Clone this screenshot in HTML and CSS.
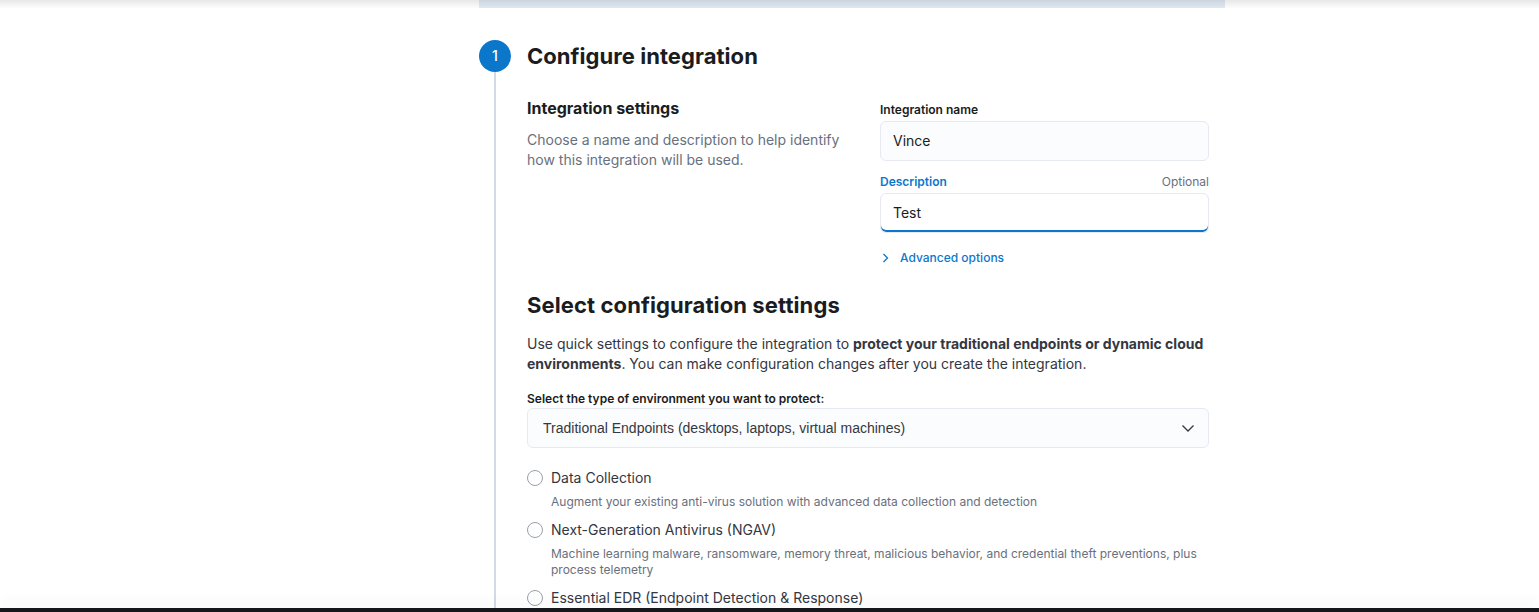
FILE: index.html
```html
<!DOCTYPE html>
<html lang="en">
<head>
<meta charset="utf-8">
<title>Configure integration</title>
<link rel="stylesheet" href="styles.css">
</head>
<body>
<div class="top-shadow"></div>
<main class="page">
  <div class="band"></div>
  <section class="step">
    <header class="step-head">
      <span class="step-num">1</span>
      <h2 class="step-title">Configure integration</h2>
    </header>
    <div class="step-body">
      <div class="described">
        <div class="described-text">
          <h3 class="sub-title">Integration settings</h3>
          <p class="muted">Choose a name and description to help identify how this integration will be used.</p>
        </div>
        <div class="described-fields">
          <div class="form-row">
            <div class="label-row"><label class="label">Integration name</label></div>
            <div class="input">Vince</div>
          </div>
          <div class="form-row">
            <div class="label-row"><label class="label label-active">Description</label><span class="optional">Optional</span></div>
            <div class="input input-focus">Test</div>
          </div>
          <a class="adv-link">
            <svg class="chev-right" width="12" height="16" viewBox="0 0 12 16"><path d="M3.5 4 L7.5 8 L3.5 12" fill="none" stroke="currentColor" stroke-width="1.3"/></svg>
            <span>Advanced options</span>
          </a>
        </div>
      </div>

      <h2 class="section-title">Select configuration settings</h2>
      <p class="body-text">Use quick settings to configure the integration to <strong>protect your traditional endpoints or dynamic cloud environments</strong>. You can make configuration changes after you create the integration.</p>

      <div class="form-row select-row">
        <div class="label-row"><label class="label">Select the type of environment you want to protect:</label></div>
        <div class="select">
          <span>Traditional Endpoints (desktops, laptops, virtual machines)</span>
          <svg class="chev-down" width="16" height="16" viewBox="0 0 16 16"><path d="M2.5 5.5 L8 11 L13.5 5.5" fill="none" stroke="#343741" stroke-width="1.3"/></svg>
        </div>
      </div>

      <div class="radios">
        <div class="radio">
          <span class="radio-dot"></span>
          <div class="radio-text">
            <div class="radio-label">Data Collection</div>
            <div class="radio-desc">Augment your existing anti-virus solution with advanced data collection and detection</div>
          </div>
        </div>
        <div class="radio">
          <span class="radio-dot"></span>
          <div class="radio-text">
            <div class="radio-label">Next-Generation Antivirus (NGAV)</div>
            <div class="radio-desc">Machine learning malware, ransomware, memory threat, malicious behavior, and credential theft preventions, plus process telemetry</div>
          </div>
        </div>
        <div class="radio">
          <span class="radio-dot"></span>
          <div class="radio-text">
            <div class="radio-label">Essential EDR (Endpoint Detection &amp; Response)</div>
            <div class="radio-desc">Everything in NGAV, plus file and network telemetry</div>
          </div>
        </div>
      </div>
    </div>
  </section>
</main>
<div class="bottom-bar"></div>
</body>
</html>
```

FILE: styles.css
```css
html, body {
  margin: 0;
  padding: 0;
  background: #ffffff;
  height: 100%;
  overflow: hidden;
}
body {
  font-family: Inter, "Noto Sans", sans-serif;
  color: #343741;
  font-size: 14px;
  line-height: 20px;
}
.top-shadow {
  position: fixed;
  top: 0;
  left: 0;
  right: 0;
  height: 9px;
  background: linear-gradient(to bottom, rgba(0,0,0,0.09), rgba(0,0,0,0));
  pointer-events: none;
  z-index: 5;
}
.page {
  margin-left: 479px;
  width: 746px;
}
.band {
  height: 8px;
  background: #e1ebf5;
}
.step {
  padding-top: 32px;
}
.step-head {
  display: flex;
  align-items: center;
  gap: 16px;
  height: 32px;
}
.step-num {
  width: 32px;
  height: 32px;
  border-radius: 50%;
  background: #0b77cb;
  color: #ffffff;
  font-size: 14px;
  font-weight: 500;
  display: flex;
  align-items: center;
  justify-content: center;
  flex: none;
}
.step-title {
  margin: 0;
  font-size: 22px;
  line-height: 32px;
  font-weight: 700;
  color: #1a1c21;
  letter-spacing: 0.05px;
}
.step-body {
  margin-left: 15px;
  border-left: 2px solid #d3dae6;
  padding: 24px 16px 40px 31px;
  min-height: 600px;
}
.described {
  display: grid;
  grid-template-columns: 1fr 329px;
  column-gap: 32px;
}
.sub-title {
  margin: 0;
  font-size: 16px;
  line-height: 24px;
  font-weight: 700;
  color: #1a1c21;
}
.muted {
  margin: 10px 0 0;
  color: #69707d;
  font-size: 14px;
  line-height: 20px;
}
.described-fields {
  padding-top: 6px;
}
.form-row + .form-row {
  margin-top: 13px;
}
.label-row {
  display: flex;
  justify-content: space-between;
  align-items: baseline;
  margin-bottom: 3px;
}
.label {
  font-size: 12px;
  line-height: 16px;
  font-weight: 600;
  color: #1a1c21;
}
.label-active {
  color: #0b77cb;
}
.optional {
  font-size: 12px;
  line-height: 16px;
  color: #69707d;
}
.input {
  box-sizing: border-box;
  height: 40px;
  border: 1px solid #e6e9f0;
  border-radius: 6px;
  background: #fbfcfd;
  padding: 0 12px;
  display: flex;
  align-items: center;
  font-size: 14px;
  color: #1a1c21;
}
.input-focus {
  background: #ffffff;
  box-shadow: inset 0 -2px 0 #0b77cb;
}
.adv-link {
  display: flex;
  align-items: center;
  gap: 8px;
  margin-top: 17px;
  color: #0b77cb;
  font-size: 12px;
  line-height: 16px;
  font-weight: 500;
}
.chev-right {
  color: #0b77cb;
}
.section-title {
  margin: 23px 0 0;
  font-size: 22px;
  line-height: 32px;
  font-weight: 700;
  color: #1a1c21;
  letter-spacing: 0.1px;
}
.body-text {
  margin: 13px 0 0;
  font-size: 14px;
  line-height: 20px;
  color: #343741;
}
.body-text strong {
  font-weight: 700;
  color: #343741;
}
.select-row {
  margin-top: 17px;
}
.select-row .label-row {
  margin-bottom: 1px;
}
.select {
  box-sizing: border-box;
  height: 40px;
  border: 1px solid #e6e9f0;
  border-radius: 6px;
  background: #fbfcfd;
  padding: 0 12px 0 15px;
  display: flex;
  align-items: center;
  justify-content: space-between;
  color: #343741;
  font-family: "Liberation Sans", Arial, sans-serif;
  font-size: 14px;
}
.radios {
  margin-top: 20px;
  display: flex;
  flex-direction: column;
  gap: 10px;
}
.radio {
  display: flex;
  gap: 8px;
  align-items: flex-start;
}
.radio-dot {
  box-sizing: border-box;
  width: 16px;
  height: 16px;
  border: 1px solid #9aa0a8;
  border-radius: 50%;
  background: #ffffff;
  margin-top: 2px;
  flex: none;
}
.radio-label {
  font-size: 14px;
  line-height: 20px;
  color: #343741;
}
.radio-desc {
  margin-top: 6px;
  font-size: 12px;
  line-height: 16px;
  color: #69707d;
  max-width: 658px;
}
.bottom-bar {
  position: fixed;
  left: 0;
  right: 0;
  bottom: 0;
  height: 4px;
  background: #15171c;
  box-shadow: 0 -6px 12px rgba(0,0,0,0.06);
  z-index: 6;
}
```
